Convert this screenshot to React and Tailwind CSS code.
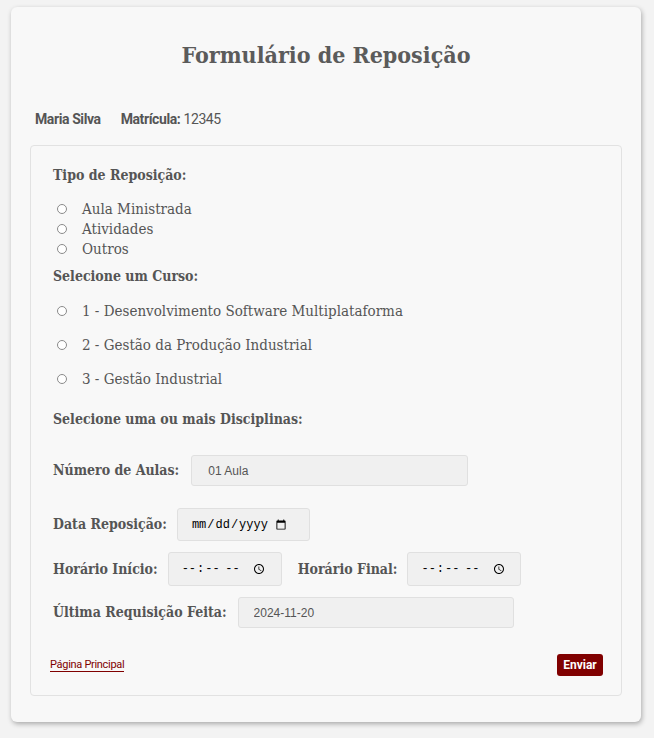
import { useState } from "react";

const slab = { fontFamily: '"DejaVu Serif Condensed", "DejaVu Serif", serif' };

const Radio = ({ name, label, checked, onChange }) => (
    <label className="flex items-center cursor-pointer">
        <input
            type="radio"
            name={name}
            checked={checked}
            onChange={onChange}
            className="appearance-none w-[10px] h-[10px] rounded-full border border-[#8a8a8a] bg-white ml-[4px] mr-[15px] checked:bg-[#800000]"
        />
        <span>{label}</span>
    </label>
);

export default function App() {
    const [tipo, setTipo] = useState("");
    const [curso, setCurso] = useState("");

    const tipos = ["Aula Ministrada", "Atividades", "Outros"];
    const cursos = [
        "1 - Desenvolvimento Software Multiplataforma",
        "2 - Gestão da Produção Industrial",
        "3 - Gestão Industrial",
    ];

    return (
        <div className="min-h-screen bg-[#f3f3f3] pt-[7px] pl-[11px]">
            <div className="w-[630px] h-[715px] bg-[#f8f8f8] rounded-md shadow-[1px_2px_5px_rgba(0,0,0,0.3)] px-[19px]">
                <h1 style={slab} className="text-center text-[23px] leading-[32px] font-bold text-[#5b5b5b] pt-[32px]">
                    Formulário de Reposição
                </h1>

                <div className="flex items-center gap-[20px] mt-[38px] ml-[5px] text-[14px] text-[#555] font-['Roboto',sans-serif] tracking-[-0.4px]">
                    <span className="font-bold">Maria Silva</span>
                    <span>
                        <span className="font-bold">Matrícula:</span> 12345
                    </span>
                </div>

                <div style={slab} className="mt-[15px] border border-[#e2e2e2] rounded-sm h-[551px] pl-[22px] pr-[18px] pt-[19px] text-[#555]">
                    <p className="font-bold text-[14px] leading-[20px]">Tipo de Reposição:</p>
                    <div className="mt-[14px] text-[15px] leading-[20px]">
                        {tipos.map((t) => (
                            <Radio key={t} name="tipo" label={t} checked={tipo === t} onChange={() => setTipo(t)} />
                        ))}
                    </div>

                    <p className="font-bold text-[14px] leading-[20px] mt-[7px]">Selecione um Curso:</p>
                    <div className="mt-[15px] flex flex-col gap-[14px] text-[15px] leading-[20px]">
                        {cursos.map((c) => (
                            <Radio key={c} name="curso" label={c} checked={curso === c} onChange={() => setCurso(c)} />
                        ))}
                    </div>

                    <p className="font-bold text-[14px] leading-[20px] mt-[20px]">Selecione uma ou mais Disciplinas:</p>

                    <div className="flex items-center mt-[26px] text-[14px] font-bold">
                        <span>Número de Aulas:</span>
                        <input
                            readOnly
                            value="01 Aula"
                            className="ml-[12px] w-[277px] h-[31px] bg-[#f0f0f0] border border-[#e0e0e0] rounded-[3px] pl-[16px] text-[12px] font-normal text-[#555] font-['Liberation_Sans',Arial,sans-serif] outline-none"
                        />
                    </div>

                    <div className="flex items-center mt-[22px] text-[14px] font-bold">
                        <span>Data Reposição:</span>
                        <input
                            type="date"
                            className="ml-[10px] w-[133px] h-[33px] bg-[#f0f0f0] border border-[#e0e0e0] rounded-[3px] pl-[13px] pr-[20px] text-[12px] font-normal text-black font-['Liberation_Mono',monospace] outline-none"
                        />
                    </div>

                    <div className="flex items-center mt-[11px] text-[14px] font-bold">
                        <span>Horário Início:</span>
                        <input
                            type="time"
                            className="ml-[10px] w-[114px] h-[34px] bg-[#f0f0f0] border border-[#e0e0e0] rounded-[3px] pl-[12px] pr-[12px] text-[12px] font-normal text-black font-['Liberation_Mono',monospace] outline-none"
                        />
                        <span className="ml-[16px]">Horário Final:</span>
                        <input
                            type="time"
                            className="ml-[10px] w-[114px] h-[34px] bg-[#f0f0f0] border border-[#e0e0e0] rounded-[3px] pl-[12px] pr-[12px] text-[12px] font-normal text-black font-['Liberation_Mono',monospace] outline-none"
                        />
                    </div>

                    <div className="flex items-center mt-[11px] text-[14px] font-bold">
                        <span>Última Requisição Feita:</span>
                        <input
                            readOnly
                            value="2024-11-20"
                            className="ml-[11px] w-[276px] h-[31px] bg-[#f0f0f0] border border-[#e0e0e0] rounded-[3px] pl-[15px] text-[12px] font-normal text-[#555] font-['Liberation_Sans',Arial,sans-serif] outline-none"
                        />
                    </div>

                    <div className="flex items-center justify-between mt-[26px] -ml-[3px] font-['Roboto',sans-serif]">
                        <a href="#" className="text-[11px] leading-[13px] text-[#800000] border-b-[1.5px] border-[#800000] tracking-[-0.3px]">
                            Página Principal
                        </a>
                        <button className="bg-[#800000] text-white text-[12px] font-bold rounded-[3px] w-[46px] h-[22px]">
                            Enviar
                        </button>
                    </div>
                </div>
            </div>
        </div>
    );
}
